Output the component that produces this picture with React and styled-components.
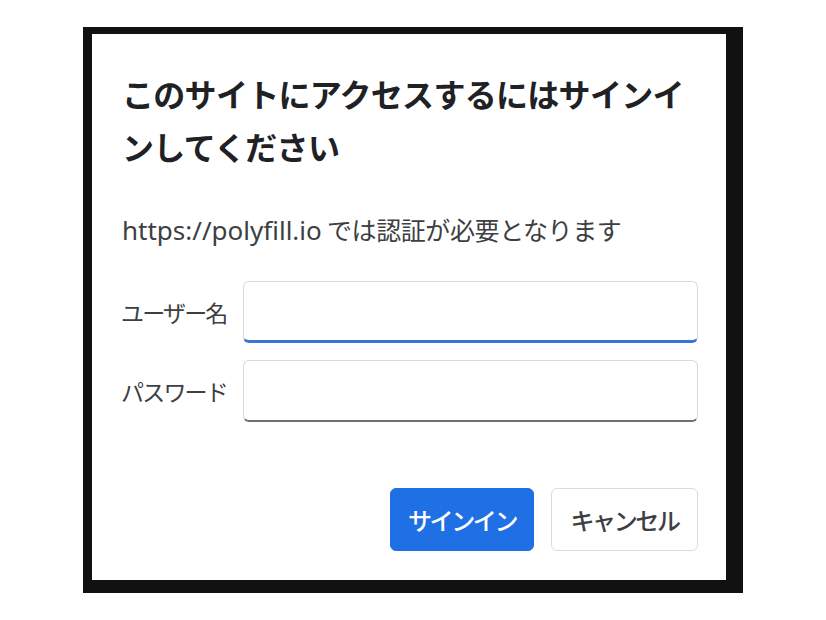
import React from 'react';
import styled, { createGlobalStyle } from 'styled-components';

const GlobalStyle = createGlobalStyle`
  html, body {
    margin: 0;
    padding: 0;
    background: #ffffff;
  }
  * {
    box-sizing: border-box;
  }
`;

function App() {
  return (
    <>
      <GlobalStyle />
      <Pagina>
        <Marco>
          <Dialogo>
            <Titulo>このサイトにアクセスするにはサインインしてください</Titulo>
            <Mensaje>
              <Origen>https://polyfill.io</Origen> では認証が必要となります
            </Mensaje>

            <Formulario>
              <Etiqueta htmlFor="usuario">ユーザー名</Etiqueta>
              <Campo id="usuario" type="text" $activo />
              <Etiqueta htmlFor="clave">パスワード</Etiqueta>
              <Campo id="clave" type="password" />
            </Formulario>

            <Acciones>
              <Boton $primario $ancho={144}>サインイン</Boton>
              <Boton $ancho={147}>キャンセル</Boton>
            </Acciones>
          </Dialogo>
        </Marco>
      </Pagina>
    </>
  );
}

const Pagina = styled.div`
  padding: 27px 0 0 83px;
  font-family: "Noto Sans CJK JP", sans-serif;
`;

const Marco = styled.div`
  display: inline-block;
  border-style: solid;
  border-color: #111111;
  border-width: 7px 17px 13px 9px;
`;

const Dialogo = styled.div`
  width: 634px;
  height: 546px;
  background: #ffffff;
  padding: 33px 28px 29px 30px;
  display: flex;
  flex-direction: column;
`;

const Titulo = styled.h1`
  margin: 0;
  font-size: 32px;
  font-weight: 700;
  letter-spacing: -0.7px;
  line-height: 53px;
  color: #202124;
`;

const Mensaje = styled.p`
  margin: 39px 0 0;
  height: 34px;
  font-size: 25px;
  letter-spacing: -0.4px;
  line-height: 34px;
  color: #3c4043;
  white-space: nowrap;
`;

const Origen = styled.span`
  font-family: "Noto Sans", "Noto Sans CJK JP", sans-serif;
  font-size: 26px;
  letter-spacing: 0;
`;

const Formulario = styled.div`
  margin-top: 35px;
  display: grid;
  grid-template-columns: 109px 1fr;
  column-gap: 12px;
  row-gap: 17px;
  align-items: center;
`;

const Etiqueta = styled.label`
  font-size: 23px;
  letter-spacing: -1.8px;
  color: #3c4043;
  white-space: nowrap;
  margin-left: -1px;
`;

const Campo = styled.input`
  height: 62px;
  width: 100%;
  border: 1px solid #d9d9d9;
  border-radius: 6px;
  border-bottom: ${p => (p.$activo ? '3px solid #3a73d9' : '2px solid #6f6f6f')};
  background: #ffffff;
  outline: none;
  padding: 0 12px;
  font-size: 22px;
`;

const Acciones = styled.div`
  margin-top: 66px;
  display: flex;
  justify-content: flex-end;
  gap: 17px;
`;

const Boton = styled.button`
  height: 63px;
  width: ${p => p.$ancho}px;
  padding: 0;
  border-radius: 6px;
  border: 1px solid ${p => (p.$primario ? '#1f6fe5' : '#dadce0')};
  background: ${p => (p.$primario ? '#1f6fe5' : '#ffffff')};
  color: ${p => (p.$primario ? '#ffffff' : '#3c4043')};
  font-family: "Noto Sans CJK JP", sans-serif;
  font-size: 24px;
  font-weight: 500;
  letter-spacing: -2.4px;
  cursor: pointer;
`;

export default App
